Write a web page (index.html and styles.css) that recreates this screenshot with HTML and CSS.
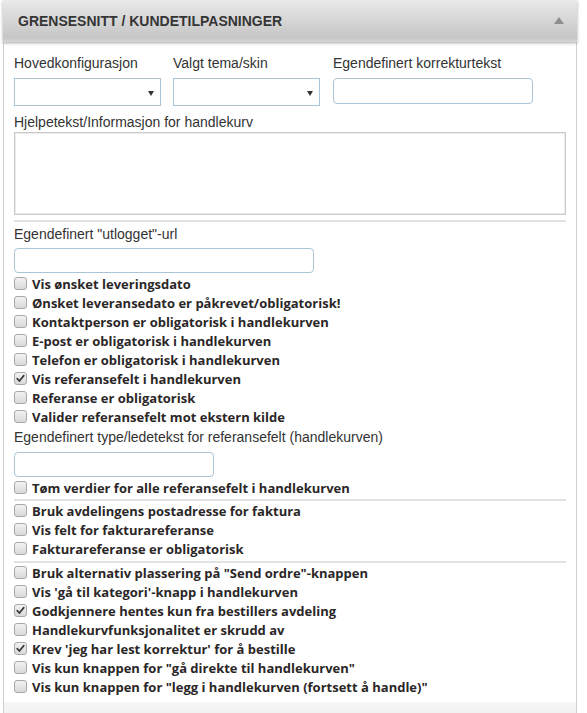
FILE: index.html
```html
<!DOCTYPE html>
<html lang="no">
<head>
<meta charset="utf-8">
<title>Grensesnitt / Kundetilpasninger</title>
<link rel="stylesheet" href="styles.css">
</head>
<body>
<div class="panel">
  <div class="panel-head">
    <h2 class="panel-title">GRENSESNITT / KUNDETILPASNINGER</h2>
    <span class="caret"></span>
  </div>
  <div class="panel-body">
    <div class="row-top">
      <div class="field f-sel">
        <label class="lbl">Hovedkonfigurasjon</label>
        <div class="select"><span class="sel-arrow"></span></div>
      </div>
      <div class="field f-sel f-mid">
        <label class="lbl">Valgt tema/skin</label>
        <div class="select"><span class="sel-arrow"></span></div>
      </div>
      <div class="field f-txt">
        <label class="lbl">Egendefinert korrekturtekst</label>
        <input class="txt" type="text">
      </div>
    </div>

    <label class="lbl lbl-help">Hjelpetekst/Informasjon for handlekurv</label>
    <textarea class="area"></textarea>

    <div class="sep sep-1"></div>

    <label class="lbl lbl-url">Egendefinert "utlogget"-url</label>
    <input class="txt txt-url" type="text">

    <div class="checks checks-1">
      <div class="check"><span class="cb"></span>Vis ønsket leveringsdato</div>
      <div class="check"><span class="cb"></span>Ønsket leveransedato er påkrevet/obligatorisk!</div>
      <div class="check"><span class="cb"></span>Kontaktperson er obligatorisk i handlekurven</div>
      <div class="check"><span class="cb"></span>E-post er obligatorisk i handlekurven</div>
      <div class="check"><span class="cb"></span>Telefon er obligatorisk i handlekurven</div>
      <div class="check"><span class="cb on"><svg viewBox="0 0 13 13" width="13" height="13"><path d="M3.2 6.6 L5.4 9 L9.8 3.6" fill="none" stroke="#3a3a3a" stroke-width="1.7" stroke-linecap="round" stroke-linejoin="round"/></svg></span>Vis referansefelt i handlekurven</div>
      <div class="check"><span class="cb"></span>Referanse er obligatorisk</div>
      <div class="check"><span class="cb"></span>Valider referansefelt mot ekstern kilde</div>
    </div>

    <label class="lbl lbl-ref">Egendefinert type/ledetekst for referansefelt (handlekurven)</label>
    <input class="txt txt-ref" type="text">
    <div class="check check-tom"><span class="cb"></span>Tøm verdier for alle referansefelt i handlekurven</div>

    <div class="sep sep-2"></div>

    <div class="checks">
      <div class="check"><span class="cb"></span>Bruk avdelingens postadresse for faktura</div>
      <div class="check"><span class="cb"></span>Vis felt for fakturareferanse</div>
      <div class="check"><span class="cb"></span>Fakturareferanse er obligatorisk</div>
    </div>

    <div class="sep sep-3"></div>

    <div class="checks">
      <div class="check"><span class="cb"></span>Bruk alternativ plassering på "Send ordre"-knappen</div>
      <div class="check"><span class="cb"></span>Vis 'gå til kategori'-knapp i handlekurven</div>
      <div class="check"><span class="cb on"><svg viewBox="0 0 13 13" width="13" height="13"><path d="M3.2 6.6 L5.4 9 L9.8 3.6" fill="none" stroke="#3a3a3a" stroke-width="1.7" stroke-linecap="round" stroke-linejoin="round"/></svg></span>Godkjennere hentes kun fra bestillers avdeling</div>
      <div class="check"><span class="cb"></span>Handlekurvfunksjonalitet er skrudd av</div>
      <div class="check"><span class="cb on"><svg viewBox="0 0 13 13" width="13" height="13"><path d="M3.2 6.6 L5.4 9 L9.8 3.6" fill="none" stroke="#3a3a3a" stroke-width="1.7" stroke-linecap="round" stroke-linejoin="round"/></svg></span>Krev 'jeg har lest korrektur' for å bestille</div>
      <div class="check"><span class="cb"></span>Vis kun knappen for "gå direkte til handlekurven"</div>
      <div class="check"><span class="cb"></span>Vis kun knappen for "legg i handlekurven (fortsett å handle)"</div>
    </div>
  </div>
  <div class="panel-foot"></div>
</div>
</body>
</html>
```
FILE: styles.css
```css
* { box-sizing: border-box; }

html, body {
  margin: 0;
  padding: 0;
  background: #ffffff;
}

body {
  font-family: "Liberation Sans", Arial, sans-serif;
  color: #333333;
}

.panel {
  width: 574px;
  margin-left: 3px;
}

.panel-head {
  height: 42px;
  display: flex;
  align-items: center;
  justify-content: space-between;
  padding: 0 13px 0 15px;
  background: linear-gradient(to bottom, #e9e9e9 0%, #d9d9d9 40%, #c6c6c6 90%, #d6d6d6 100%);
  box-shadow: 0 1px 3px rgba(0, 0, 0, 0.35);
  position: relative;
  z-index: 1;
}

.panel-title {
  margin: 0;
  font-size: 14px;
  font-weight: bold;
  color: #353535;
  line-height: 20px;
}

.caret {
  width: 0;
  height: 0;
  border-left: 5px solid transparent;
  border-right: 5px solid transparent;
  border-bottom: 7px solid #8e8e8e;
  margin-top: -2px;
}

.panel-body {
  border-left: 1px solid #d0d0d0;
  border-right: 1px solid #d0d0d0;
  padding: 11px 10px 6px 10px;
  display: flex;
  flex-direction: column;
  align-items: flex-start;
  background: #ffffff;
}

.panel-foot {
  height: 11px;
  border-left: 1px solid #d0d0d0;
  border-right: 1px solid #d0d0d0;
  background: linear-gradient(to bottom, #f6f6f6, #f1f1f1);
}

.lbl {
  display: block;
  font-size: 14px;
  line-height: 20px;
  color: #333333;
}

.row-top {
  display: flex;
  align-items: flex-start;
}

.field {
  display: flex;
  flex-direction: column;
}

.f-sel { width: 147px; }
.f-mid { margin-left: 12px; }
.f-txt { width: 200px; margin-left: 13px; }

.field .lbl { margin-bottom: 5px; }

.select {
  height: 28px;
  border: 1px solid #a9c5d7;
  background: #ffffff;
  position: relative;
}

.sel-arrow {
  position: absolute;
  right: 6px;
  top: 12px;
  width: 0;
  height: 0;
  border-left: 3px solid transparent;
  border-right: 3px solid transparent;
  border-top: 5px solid #333333;
}

.txt {
  display: block;
  height: 26px;
  border: 1px solid #a9c5d7;
  border-radius: 4px;
  background: #ffffff;
  margin: 0;
  padding: 0 6px;
  font: 14px "Liberation Sans", Arial, sans-serif;
}

.f-txt .txt { width: 200px; }

.lbl-help { margin-top: 6px; }

.area {
  display: block;
  width: 552px;
  height: 83px;
  margin: 0;
  border: 1px solid #c9c9c9;
  box-shadow: inset 0 0 0 1px #ececec;
  resize: none;
  background: #ffffff;
}

.sep {
  width: 552px;
  height: 2px;
  background: #e2e2e2;
}

.sep-1 { margin-top: 5px; }
.sep-2 { margin-top: 2px; }
.sep-3 { margin-top: 3px; }

.lbl-url { margin-top: 2px; }

.txt-url {
  width: 300px;
  height: 25px;
  margin-top: 4px;
}

.checks {
  display: flex;
  flex-direction: column;
}

.checks-1 { margin-top: 1px; }

.check {
  display: flex;
  align-items: center;
  height: 19px;
  font-family: "Open Sans", "Segoe UI", sans-serif;
  font-weight: 700;
  font-size: 13px;
  color: #2b2727;
  white-space: nowrap;
}

.cb {
  width: 13px;
  height: 13px;
  flex: none;
  margin-right: 5px;
  border: 1px solid #a8a8a8;
  border-radius: 3px;
  background: linear-gradient(to bottom, #f2f2f2, #d9d9d9);
  display: flex;
  align-items: center;
  justify-content: center;
}

.cb svg {
  display: block;
  margin: -1px;
}

.lbl-ref { margin-top: 1px; }

.txt-ref {
  width: 200px;
  height: 25px;
  margin-top: 5px;
}

.check-tom { margin-top: 1px; }
```
